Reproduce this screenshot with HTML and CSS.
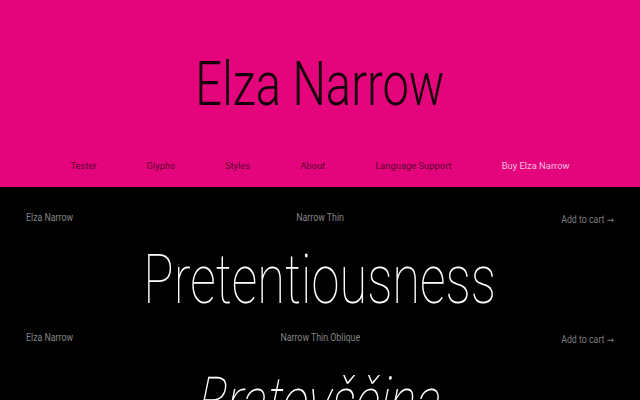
FILE: index.html
```html
<!DOCTYPE html>
<html>
<head>
<meta charset="utf-8">
<link rel="stylesheet" href="styles.css">
</head>
<body>
<header class="hero">
  <h1 class="title"><span class="narrow">Elza Narrow</span></h1>
  <nav class="nav">
    <a class="nav-link">Tester</a>
    <a class="nav-link">Glyphs</a>
    <a class="nav-link">Styles</a>
    <a class="nav-link">About</a>
    <a class="nav-link">Language Support</a>
    <a class="nav-link buy">Buy Elza Narrow</a>
  </nav>
</header>
<main class="specimens">
  <section class="specimen">
    <div class="meta">
      <span class="meta-family">Elza Narrow</span>
      <span class="meta-style">Narrow Thin</span>
      <span class="meta-cart">Add to cart <span class="arrow">→</span></span>
    </div>
    <div class="sample"><span class="narrow">Pretentiousness</span></div>
  </section>
  <section class="specimen">
    <div class="meta">
      <span class="meta-family">Elza Narrow</span>
      <span class="meta-style">Narrow Thin Oblique</span>
      <span class="meta-cart">Add to cart <span class="arrow">→</span></span>
    </div>
    <div class="sample oblique"><span class="narrow">Bratovščina</span></div>
  </section>
</main>
</body>
</html>
```
FILE: styles.css
```css
html, body { margin: 0; padding: 0; }
body {
  background: #000;
  font-family: Roboto, "Liberation Sans", sans-serif;
  width: 640px;
  height: 400px;
  overflow: hidden;
}
.hero {
  background: #e4047b;
  height: 187px;
  display: flex;
  flex-direction: column;
  align-items: center;
}
.title {
  margin: 0;
  padding-top: 44px;
  height: 80px;
  font-size: 62px;
  font-weight: 300;
  line-height: 80px;
  color: #14000a;
  text-align: center;
}
.narrow {
  display: inline-block;
  transform: scaleX(0.76);
  white-space: nowrap;
}
.nav {
  margin-top: 36px;
  display: flex;
  justify-content: center;
  gap: 50px;
  font-size: 9.4px;
  line-height: 12px;
}
.nav-link { color: #5c0030; }
.nav-link.buy { color: #f8c0e0; }
.specimen { display: flex; flex-direction: column; }
.meta {
  display: grid;
  grid-template-columns: 1fr auto 1fr;
  padding: 0 26px;
  font-size: 10px;
  line-height: 12px;
  color: #858585;
}
.meta > span {
  display: inline-block;
  transform: scaleX(0.88);
  white-space: nowrap;
}
.meta-cart { color: #7c7c7c; }
.arrow { font-size: 9.5px; font-family: "DejaVu Sans", sans-serif; }
.specimen:first-child .meta { margin-top: 25px; }
.meta-family { justify-self: start; transform-origin: left center; }
.meta-style { justify-self: center; }
.meta > .meta-cart { justify-self: end; margin-top: 2px; transform-origin: right center; }
.sample {
  text-align: center;
  font-size: 68px;
  font-weight: 100;
  line-height: 80px;
  color: #fff;
  height: 92px;
  padding-top: 14px;
}
.sample .narrow { transform: scaleX(0.745); }
.oblique { font-style: italic; padding-top: 16px; }
.oblique .narrow { transform: scaleX(0.73) skewX(-6deg); }
```
